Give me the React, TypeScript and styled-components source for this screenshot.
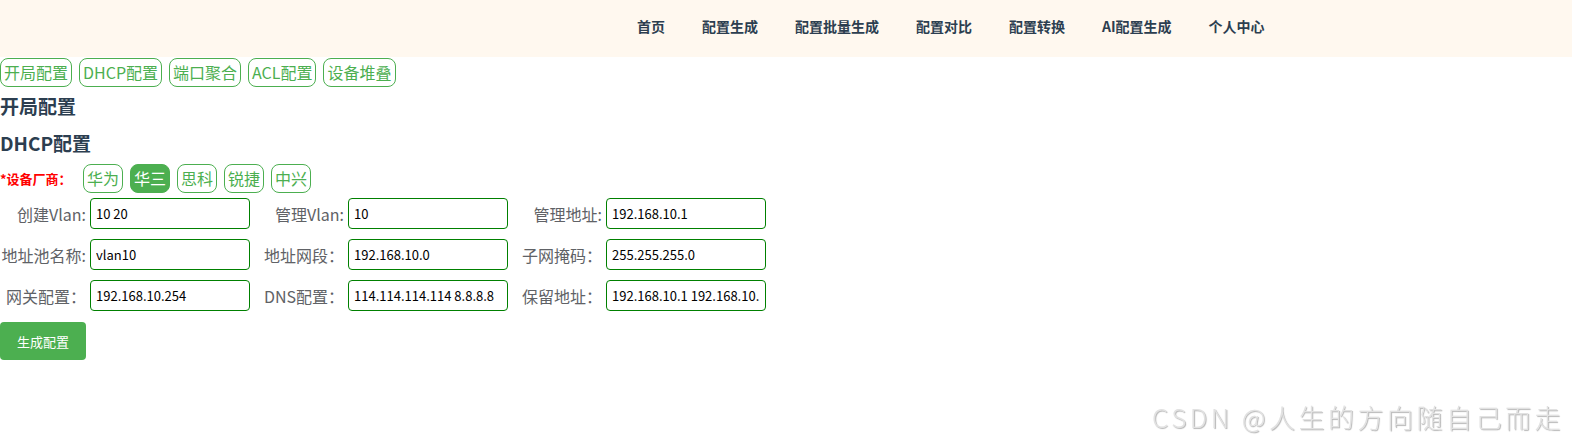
import styled, { createGlobalStyle } from "styled-components"

const GlobalStyle = createGlobalStyle`
    body {
        margin: 0;
        background: #fff;
        font-family: "Noto Sans CJK SC", "Noto Sans", sans-serif;
    }
`

const Header = styled.div`
    height: 57px;
    background-color: #fff8ef;
    display: flex;
    align-items: flex-start;
    padding-left: 637px;
    box-sizing: border-box;
`

const Nav = styled.div`
    display: flex;
    gap: 37px;
    padding-top: 16px;
`

const NavItem = styled.a`
    font-size: 14px;
    font-weight: bold;
    color: #2c3e50;
    line-height: 20px;
    cursor: pointer;
`

const TabRow = styled.div`
    display: flex;
    gap: 7px;
    padding-top: 1px;
`

const OutlineButton = styled.button<{ $active?: boolean }>`
    font-family: inherit;
    font-size: 16px;
    line-height: 22px;
    padding: 2px 3px 3px;
    border: 1px solid #4caf50;
    border-radius: 8px;
    background: ${p => (p.$active ? "#4caf50" : "#fff")};
    color: ${p => (p.$active ? "#fff" : "#4caf50")};
    cursor: pointer;
`

const Title = styled.h3`
    font-size: 19px;
    font-weight: bold;
    color: #2c3e50;
    margin: 0;
    line-height: 26px;
`

const Section = styled.div`
    display: flex;
    flex-direction: column;
    gap: 11px;
    padding-top: 6px;
`

const VendorRow = styled.div`
    display: flex;
    align-items: center;
    gap: 7px;
    margin-top: 2px;
`

const VendorLabel = styled.span`
    color: #f00;
    font-size: 13px;
    font-weight: bold;
    width: 76px;
`

const FormGrid = styled.div`
    display: grid;
    grid-template-columns: repeat(3, 258px);
    row-gap: 10px;
    margin-top: 5px;
`

const Field = styled.div`
    display: flex;
    align-items: center;
`

const Label = styled.label`
    width: 88px;
    padding-right: 2px;
    box-sizing: border-box;
    text-align: right;
    font-size: 16px;
    color: #606266;
    white-space: nowrap;
`

const Input = styled.input`
    width: 160px;
    height: 31px;
    box-sizing: border-box;
    border: 1px solid #008000;
    border-radius: 4px;
    padding: 0 5px;
    font-family: inherit;
    font-size: 13px;
    color: #000;
    outline: none;
    margin-left: 2px;
`

const SubmitButton = styled.button`
    width: 86px;
    height: 38px;
    border: none;
    border-radius: 4px;
    background-color: #4caf50;
    color: #fff;
    font-family: inherit;
    font-size: 13px;
    cursor: pointer;
    align-self: flex-start;
`

const Watermark = styled.div`
    position: fixed;
    right: 8px;
    bottom: 10px;
    font-size: 26px;
    font-weight: 300;
    color: #e2e2e2;
    text-shadow: 1px 1px 1px #b4b4b4;
    letter-spacing: 3.5px;
`

const navItems = ["首页", "配置生成", "配置批量生成", "配置对比", "配置转换", "AI配置生成", "个人中心"]
const tabs = ["开局配置", "DHCP配置", "端口聚合", "ACL配置", "设备堆叠"]
const vendors = ["华为", "华三", "思科", "锐捷", "中兴"]

const fields = [
    { label: "创建Vlan:", value: "10 20" },
    { label: "管理Vlan:", value: "10" },
    { label: "管理地址:", value: "192.168.10.1" },
    { label: "地址池名称:", value: "vlan10" },
    { label: "地址网段：", value: "192.168.10.0" },
    { label: "子网掩码：", value: "255.255.255.0" },
    { label: "网关配置：", value: "192.168.10.254" },
    { label: "DNS配置：", value: "114.114.114.114 8.8.8.8" },
    { label: "保留地址：", value: "192.168.10.1 192.168.10.10" },
]

export default function App() {
    return (
        <>
            <GlobalStyle />
            <Header>
                <Nav>
                    {navItems.map(n => (
                        <NavItem key={n}>{n}</NavItem>
                    ))}
                </Nav>
            </Header>
            <TabRow>
                {tabs.map(t => (
                    <OutlineButton key={t}>{t}</OutlineButton>
                ))}
            </TabRow>
            <Section>
                <Title>开局配置</Title>
                <Title>DHCP配置</Title>
            </Section>
            <Section>
                <VendorRow>
                    <VendorLabel>*设备厂商：</VendorLabel>
                    {vendors.map(v => (
                        <OutlineButton key={v} $active={v === "华三"}>{v}</OutlineButton>
                    ))}
                </VendorRow>
            </Section>
            <Section style={{ paddingTop: 0 }}>
                <FormGrid>
                    {fields.map(f => (
                        <Field key={f.label}>
                            <Label>{f.label}</Label>
                            <Input defaultValue={f.value} />
                        </Field>
                    ))}
                </FormGrid>
                <SubmitButton>生成配置</SubmitButton>
            </Section>
            <Watermark>CSDN @人生的方向随自己而走</Watermark>
        </>
    )
}
